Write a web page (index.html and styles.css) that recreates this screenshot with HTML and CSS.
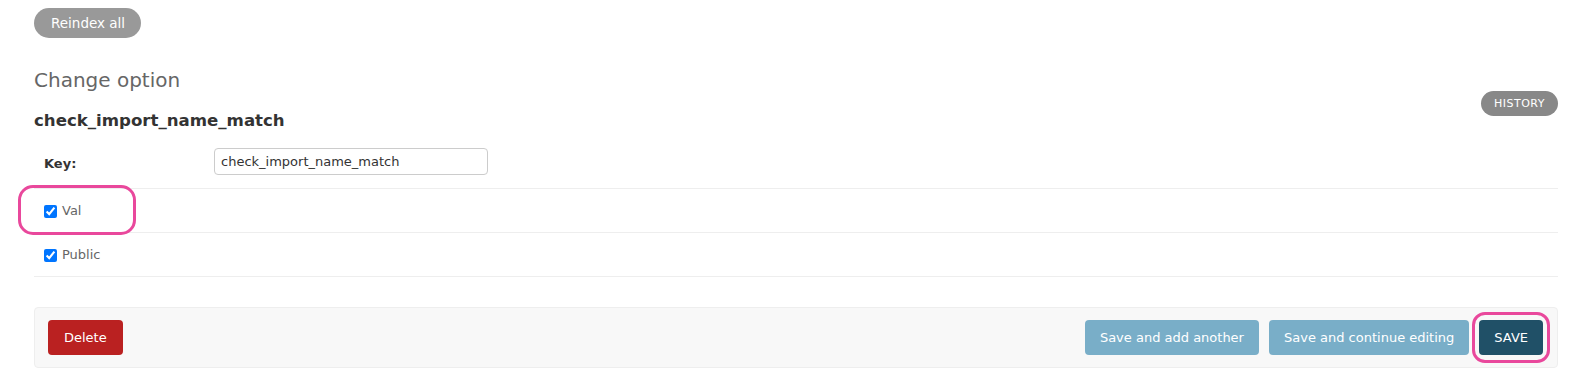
FILE: index.html
```html
<!DOCTYPE html>
<html lang="en">
<head>
<meta charset="utf-8">
<title>Change option</title>
<link rel="stylesheet" href="styles.css">
</head>
<body>
<div class="page">
  <div class="toolbar">
    <button class="pill-btn" type="button">Reindex all</button>
  </div>
  <h1 class="page-title">Change option</h1>
  <div class="titlebar">
    <h2 class="obj-title">check_import_name_match</h2>
    <a class="history-btn" href="#">History</a>
  </div>
  <form class="change-form">
    <fieldset class="module">
      <div class="form-row">
        <label class="field-label" for="id_key">Key:</label>
        <input class="text-input" id="id_key" type="text" value="check_import_name_match">
      </div>
      <div class="form-row check-row">
        <label class="check-label"><input type="checkbox" checked> <span>Val</span></label>
        <span class="highlight highlight-val"></span>
      </div>
      <div class="form-row check-row">
        <label class="check-label"><input type="checkbox" checked> <span>Public</span></label>
      </div>
    </fieldset>
    <div class="submit-row">
      <a class="btn btn-delete" href="#">Delete</a>
      <div class="submit-right">
        <button class="btn btn-secondary" type="button">Save and add another</button>
        <button class="btn btn-secondary" type="button">Save and continue editing</button>
        <span class="save-wrap">
          <button class="btn btn-default" type="button">SAVE</button>
          <span class="highlight highlight-save"></span>
        </span>
      </div>
    </div>
  </form>
</div>
</body>
</html>
```

FILE: styles.css
```css
* { box-sizing: border-box; }
html, body { margin: 0; padding: 0; background: #fff; }
body {
  font-family: "DejaVu Sans", Verdana, sans-serif;
  font-size: 13px;
  color: #333;
}
.page {
  padding: 8px 28px 0 34px;
}
.toolbar { height: 30px; display: flex; }
.pill-btn {
  font-family: inherit;
  font-size: 13.5px;
  color: #fff;
  background: #999;
  border: 0;
  border-radius: 15px;
  height: 30px;
  padding: 0 16px 0 17px;
  line-height: 30px;
}
.page-title {
  margin: 30px 0 0;
  font-size: 20px;
  line-height: 24px;
  font-weight: 400;
  color: #666;
}
.titlebar {
  display: flex;
  justify-content: space-between;
  align-items: flex-start;
}
.obj-title {
  margin: 20px 0 0;
  font-size: 16.6px;
  line-height: 18px;
  font-weight: 700;
  color: #333;
}
.history-btn {
  margin-top: -1px;
  height: 25px;
  line-height: 25px;
  padding: 0 13px;
  border-radius: 13px;
  background: #888;
  color: #fff;
  text-decoration: none;
  text-transform: uppercase;
  font-size: 11px;
  letter-spacing: 0.5px;
}
.change-form { margin: 7px 0 0; }
.module {
  margin: 0;
  padding: 0;
  border: 0;
  min-width: 0;
}
.form-row {
  position: relative;
  display: flex;
  align-items: center;
  padding: 11px 10px 13px;
  border-bottom: 1px solid #eee;
}
.field-label {
  width: 170px;
  font-weight: 700;
  color: #333;
  font-size: 13px;
  padding-top: 3px;
}
.text-input {
  width: 274px;
  height: 27px;
  border: 1px solid #ccc;
  border-radius: 4px;
  padding: 0 6px;
  font-family: inherit;
  font-size: 13px;
  color: #333;
  background: #fff;
}
.check-row {
  padding: 15px 10px 14px;
  line-height: 14px;
}
.check-label {
  display: flex;
  align-items: center;
  color: #666;
  font-size: 13px;
}
.check-label input {
  width: 13px;
  height: 13px;
  margin: 0 5px 0 0;
  accent-color: #0075ff;
}
.highlight {
  position: absolute;
  border: 3px solid #e9489c;
  pointer-events: none;
}
.highlight-val {
  left: -16px;
  top: -4px;
  width: 118px;
  height: 50px;
  border-radius: 15px;
}
.submit-row {
  margin-top: 30px;
  display: flex;
  justify-content: space-between;
  align-items: center;
  padding: 12px 14px 12px 13px;
  background: #f8f8f8;
  border: 1px solid #eee;
  border-radius: 4px;
}
.submit-right {
  display: flex;
  gap: 10px;
  align-items: center;
}
.btn {
  display: inline-block;
  height: 35px;
  line-height: 35px;
  padding: 0 15px;
  border: 0;
  border-radius: 4px;
  font-family: inherit;
  font-size: 13px;
  color: #fff;
  text-decoration: none;
}
.btn-delete { background: #ba2121; padding: 0 16px; }
.btn-secondary { background: #79aec8; }
.btn-default { background: #205067; padding: 0 15px; }
.save-wrap {
  position: relative;
  display: inline-block;
}
.highlight-save {
  left: -7px;
  top: -8px;
  width: 78px;
  height: 51px;
  border-radius: 13px;
}
```
